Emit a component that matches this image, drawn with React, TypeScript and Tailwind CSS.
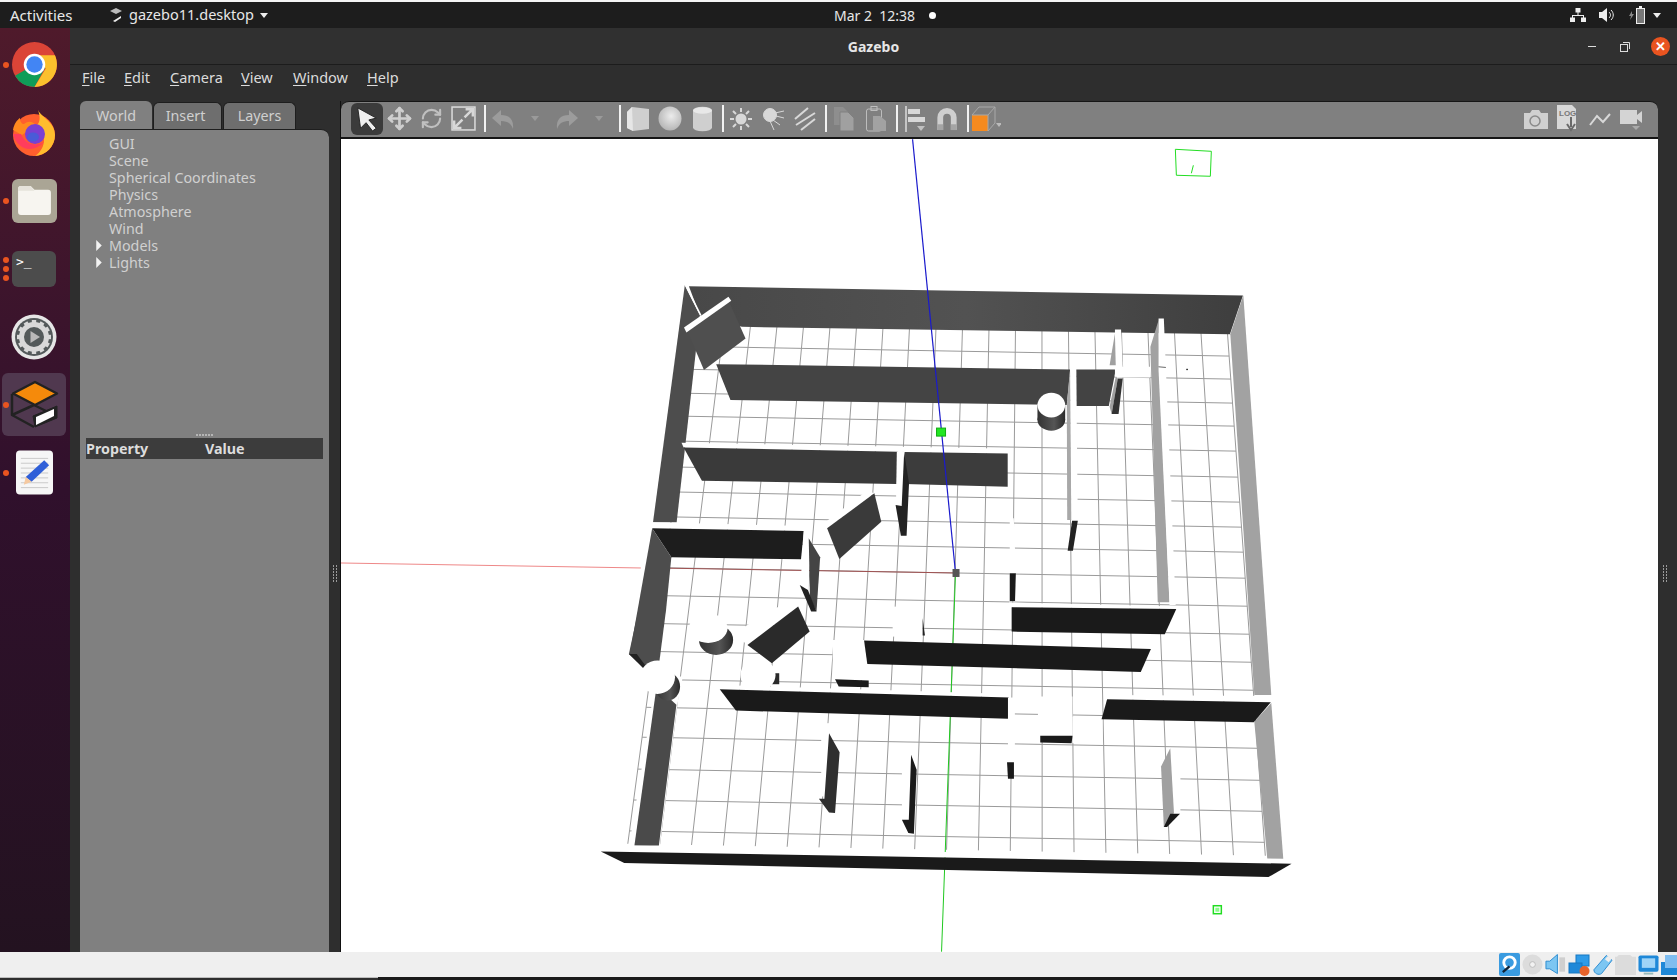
/* Gazebo 11 running inside an Ubuntu VM — window shell, panels and the maze scene. */
import { Move, RefreshCw } from 'lucide-react'
import type { ReactNode } from 'react'

const FONT = { fontFamily: '"Noto Sans", "Open Sans", sans-serif' }

const TREE = ['GUI', 'Scene', 'Spherical Coordinates', 'Physics', 'Atmosphere', 'Wind']
const MENU = [
    ['F', 'ile', 'w-[42px]'],
    ['E', 'dit', 'w-[46px]'],
    ['C', 'amera', 'w-[71px]'],
    ['V', 'iew', 'w-[52px]'],
    ['W', 'indow', 'w-[74px]'],
    ['H', 'elp', 'w-[40px]'],
]

function Poly({ p, f, s }: { p: string; f: string; s?: string }) {
    return <polygon points={p} fill={f} stroke={s} />
}

function Grid() {
    const rows = [328, 351, 374, 398, 421, 446, 472, 497, 522, 547, 573, 601, 629, 657, 685, 713, 743, 775, 806, 837]
    const t = (y: number) => (y - 327) / 523
    const cols = Array.from({ length: 21 }, (_, k) => k - 10)
    return (
        <g stroke="#9a9a9a" strokeWidth="1">
            {cols.map((i) => (
                <line key={i} x1={962 + 26.5 * i} y1={327 + i * 0.4} x2={946 + 31.9 * i} y2={850 + i * 0.6} />
            ))}
            {rows.map((y) => {
                const xl = 697 - 70 * t(y)
                const xr = 1227 + 38 * t(y)
                return <line key={y} x1={xl} y1={y + (xl - 955) * 0.018} x2={xr} y2={y + (xr - 955) * 0.018} />
            })}
        </g>
    )
}

function Scene() {
    return (
        <svg viewBox="340 139 1318 813" className="block h-full w-full bg-white">
            <defs>
                <linearGradient id="cyl" x1="0" x2="1" y1="0" y2="0">
                    <stop offset="0" stopColor="#333" />
                    <stop offset="0.6" stopColor="#555" />
                    <stop offset="1" stopColor="#2a2a2a" />
                </linearGradient>
                <linearGradient id="back" x1="0" x2="1" y1="0" y2="0">
                    <stop offset="0" stopColor="#484848" />
                    <stop offset="0.5" stopColor="#525252" />
                    <stop offset="1" stopColor="#3e3e3e" />
                </linearGradient>
            </defs>

            <Grid />

            {/* axes that sit under the walls */}
            <line x1="340" y1="563" x2="640" y2="568" stroke="#e88" strokeWidth="1" />
            <line x1="655" y1="568" x2="955" y2="573" stroke="#a05050" strokeWidth="1" />
            <line x1="955" y1="573" x2="941" y2="952" stroke="#1fc81f" strokeWidth="1" />

            {/* coordinates read off the upper half of the map */}
            <g transform="translate(640 270) scale(0.408 0.3333)">
                <Poly p="118,48 1477,76 1445,192 248,170 145,135" f="url(#back)" />
                <Poly p="108,45 145,135 88,757 30,757" f="#4d4d4d" />
                <line x1="110" y1="45" x2="147" y2="135" stroke="#fff" strokeWidth="4" />
                <Poly p="115,185 215,90 257,205 155,300" f="#4f4f4f" />
                <Poly p="106,172 215,80 222,92 112,187" f="#fff" />

                <Poly p="185,282 1053,298 1045,405 220,390" f="#444" />
                <Poly p="1068,298 1165,298 1148,408 1068,408" f="#434343" />
                <Poly p="1053,295 1068,295 1072,760 1056,750" f="#fff" />
                <Poly p="1045,405 1053,300 1056,750 1046,750" f="#a8a8a8" />
                <Poly p="1058,752 1072,752 1060,842 1047,842" f="#222" />

                <ellipse cx="1007" cy="450" rx="34" ry="32" fill="url(#cyl)" />
                <rect x="973" y="405" width="68" height="45" fill="url(#cyl)" />
                <ellipse cx="1007" cy="405" rx="34" ry="37" fill="#fff" />

                <Poly p="100,518 905,536 900,552 105,532" f="#fff" />
                <Poly p="105,532 630,545 628,642 150,632" f="#3a3a3a" />
                <Poly p="647,546 900,550 900,650 647,642" f="#3c3c3c" />
                <Poly p="628,545 646,545 642,710 626,705" f="#fff" />
                <Poly p="646,548 658,640 652,797 638,797 625,705 640,708" f="#222" />

                <Poly p="573,670 555,662 440,768 457,775" f="#fff" />
                <Poly p="573,670 590,755 487,867 457,775" f="#3a3a3a" />
                <Poly p="28,757 400,768 400,783 28,775" f="#fff" />
                <Poly p="28,775 400,783 393,868 75,862" f="#1d1d1d" />
                <Poly p="28,775 75,862 62,1020 44,1191 -27,1152" f="#4d4d4d" />
                <Poly p="400,775 414,790 412,985 392,945" f="#fff" />
                <Poly p="412,805 440,862 431,1025 415,985" f="#444" />
                <Poly p="390,945 410,960 431,1025 418,1025" f="#222" />

                <Poly p="1163,178 1178,178 1183,320 1163,320" f="#fff" />
                <Poly p="1168,290 1250,290 1250,322 1168,322" f="#fff" />
                <Poly p="1163,190 1150,285 1165,285" f="#a0a0a0" />
                <Poly p="1165,320 1150,410 1155,432 1170,325" f="#a0a0a0" />
                <Poly p="1170,325 1182,325 1172,432 1155,432" f="#333" />

                <Poly p="1270,150 1250,230 1268,997 1297,997 1272,300" f="#a2a2a2" />
                <Poly p="1270,145 1283,145 1312,1005 1297,1005 1270,300" f="#fff" />
                <Poly p="905,745 915,745 920,905 905,1000" f="#fff" />
                <Poly p="905,910 920,910 918,993 905,993" f="#1a1a1a" />
                <line x1="1270" y1="290" x2="1288" y2="292" stroke="#333" strokeWidth="2" />
                <rect x="1338" y="296" width="4" height="4" fill="#222" />
            </g>

            {/* right outer wall, broken by the white top of the lower wall */}
            <Poly p="1243,295 1230,334 1254,695 1271,695" f="#a2a2a2" />
            <Poly p="1271,703 1254,722 1267,859 1283,859" f="#a2a2a2" />

            {/* coordinates read off the lower half of the map */}
            <g transform="translate(587.5 590) scale(0.4615 0.3333)">
                <Poly p="88,772 134,380 145,260 205,260 193,345 155,767 102,780" f="#fff" />
                <Poly p="118,0 168,0 151,230 123,235 88,192" f="#4d4d4d" />
                <Poly p="88,192 105,192 131,240 123,240" f="#222" />
                <Poly p="148,290 191,345 153,767 100,767" f="#4a4a4a" />

                <Poly p="455,50 345,165 315,130 425,40" f="#fff" />
                <ellipse cx="277" cy="150" rx="37" ry="45" fill="url(#cyl)" />
                <ellipse cx="260" cy="115" rx="42" ry="44" fill="#fff" />
                <ellipse cx="172" cy="290" rx="27" ry="42" fill="url(#cyl)" />
                <ellipse cx="150" cy="262" rx="38" ry="50" fill="#fff" />
                <Poly p="455,50 480,125 398,220 345,165" f="#2a2a2a" />
                <rect x="392" y="250" width="22" height="33" fill="#2a2a2a" />
                <ellipse cx="368" cy="255" rx="38" ry="48" fill="#fff" />

                <Poly p="912,38 1275,50 1275,57 918,52" f="#fff" />
                <Poly p="918,52 1275,57 1250,133 918,125" f="#1a1a1a" />
                <Poly p="660,50 725,50 725,140 660,140" f="#fff" />
                <Poly p="725,85 730,137 725,137" f="#222" />
                <Poly p="530,150 605,150 605,270 530,270" f="#fff" />
                <Poly p="535,268 608,272 608,292 543,290" f="#1a1a1a" />
                <Poly p="598,152 1220,177 1198,246 605,222" f="#1a1a1a" />
                <Poly p="915,0 925,0 925,33 915,33" f="#1a1a1a" />

                <Poly p="285,285 912,312 912,323 285,298" f="#fff" />
                <Poly p="285,298 912,323 910,387 320,362" f="#1a1a1a" />
                <Poly p="910,323 925,323 925,520 910,520" f="#fff" />
                <Poly p="975,320 1050,320 1050,440 975,440" f="#fff" />
                <Poly p="1050,380 1115,380 1115,460 1050,460" f="#fff" />
                <Poly p="980,438 1050,438 1048,460 980,458" f="#1a1a1a" />
                <Poly p="908,517 923,517 923,567 910,567" f="#1a1a1a" />

                <Poly p="1125,315 1480,318 1480,337 1125,328" f="#fff" />
                <Poly p="1125,328 1480,337 1443,397 1113,388" f="#1a1a1a" />

                <Poly p="505,400 522,400 522,620 505,620" f="#fff" />
                <Poly p="522,430 545,487 535,670 522,668 500,627 512,627" f="#2f2f2f" />
                <Poly p="680,460 700,460 700,690 680,690" f="#fff" />
                <Poly p="700,495 712,540 706,732 694,730 680,690 695,690" f="#1a1a1a" />
                <Poly p="1262,475 1284,475 1284,670 1262,672" f="#fff" />
                <Poly p="1262,475 1242,530 1248,712 1270,670" f="#a0a0a0" />
                <Poly p="1262,672 1283,672 1255,712 1248,712" f="#1a1a1a" />

                <Poly p="80,767 1510,808 1525,822 27,785" f="#fff" />
                <Poly p="27,785 1525,822 1475,862 78,820" f="#1a1a1a" />
            </g>

            {/* markers drawn over everything */}
            <line x1="912" y1="139" x2="955" y2="573" stroke="#1a1acc" strokeWidth="1.2" />
            <rect x="936" y="428" width="9" height="8" fill="#22e622" stroke="#11aa11" />
            <rect x="952" y="569" width="7" height="8" fill="#555" />
            <polygon points="1175,149 1211,151 1210,176 1176,175" fill="none" stroke="#22dd22" strokeWidth="1" />
            <line x1="1193" y1="165" x2="1191" y2="173" stroke="#22dd22" />
            <rect x="1213" y="906" width="8" height="8" fill="none" stroke="#22dd22" strokeWidth="1.5" />
            <rect x="1215" y="908" width="4" height="4" fill="#8f8" />
        </svg>
    )
}

/* ---------- dock icons ---------- */

function Chrome() {
    return (
        <svg viewBox="0 0 44 44" className="h-[45px] w-[45px]">
            <circle cx="22" cy="22" r="22" fill="#db4437" />
            <path d="M22 22 L3 33 A22 22 0 0 0 22 44 L33 24 Z" fill="#0f9d58" />
            <path d="M22 13 H42 A22 22 0 0 1 22 44 L33 26 Z" fill="#fbc02d" />
            <circle cx="22" cy="22" r="10.5" fill="#fff" />
            <circle cx="22" cy="22" r="8" fill="#4285f4" />
        </svg>
    )
}

function Firefox() {
    return (
        <svg viewBox="0 0 46 46" className="h-[46px] w-[46px]">
            <circle cx="23" cy="25" r="21" fill="#ff5f2e" />
            <path d="M27 0 C30 7 44 12 44 25 A21 21 0 0 1 24 46 C36 38 36 22 25 16 C30 12 29 6 27 0 Z" fill="#ffbd2e" />
            <path d="M2 20 C3 14 6 10 9 8 C9 12 11 14 13 14 C18 10 22 12 25 15 L11 25 Z" fill="#ff8a1f" />
            <ellipse cx="24" cy="24" rx="10" ry="10" fill="#7b3fd1" />
            <ellipse cx="22" cy="27" rx="6" ry="4.5" fill="#4a5bd8" />
            <path d="M2 24 C6 40 22 44 33 32 C24 37 14 34 10 24 Z" fill="#ff3d5c" />
        </svg>
    )
}

function Files() {
    return (
        <div className="flex h-[44px] w-[45px] items-center justify-center rounded-md bg-[#aaa595]">
            <svg viewBox="0 0 34 30" className="h-[29px] w-[33px]">
                <path d="M3 0 H13 L17 4 H31 A3 3 0 0 1 34 7 V27 A3 3 0 0 1 31 30 H3 A3 3 0 0 1 0 27 V3 A3 3 0 0 1 3 0 Z" fill="#f7f5f0" />
                <path d="M0 5 H17 L13 0 H3 A3 3 0 0 0 0 3 Z" fill="#e6e3db" />
            </svg>
        </div>
    )
}

function Terminal() {
    return (
        <div className="h-[36px] w-[44px] rounded-md bg-[#4c4c4c] px-1 text-[13px] leading-[22px] text-white" style={{ fontFamily: '"DejaVu Sans Mono", monospace' }}>
            &gt;_
        </div>
    )
}

function Settings() {
    const teeth = Array.from({ length: 12 }, (_, k) => k * 30)
    return (
        <svg viewBox="0 0 46 46" className="h-[46px] w-[46px]">
            <circle cx="23" cy="23" r="22.5" fill="#e6e6e6" />
            <circle cx="23" cy="23" r="19" fill="#53595a" />
            <circle cx="23" cy="23" r="12.5" fill="none" stroke="#d8d8d8" strokeWidth="5" />
            {teeth.map((a) => (
                <rect key={a} x="20.8" y="6" width="4.4" height="5" fill="#d8d8d8" transform={`rotate(${a} 23 23)`} />
            ))}
            <path d="M19.5 17 L29 23 L19.5 29 Z" fill="#b9b9b9" />
        </svg>
    )
}

function GazeboLogo() {
    return (
        <svg viewBox="0 0 50 50" className="h-[50px] w-[50px]">
            <g fill="none" stroke="#222" strokeWidth="2.5" strokeLinejoin="round">
                <path d="M3 14 V35 L25 47" />
                <path d="M3 35 L25 25 L37 31" />
            </g>
            <polygon points="26,2 48,13.5 26,25 4,13.5" fill="#f58a0b" stroke="#222" strokeWidth="2.5" strokeLinejoin="round" />
            <polygon points="24,36 48,26 48,38 26,47" fill="#222" stroke="#222" strokeWidth="1" strokeLinejoin="round" />
            <polygon points="27,37 45,29 45,36 27,45" fill="#fff" />
        </svg>
    )
}

function Gedit() {
    return (
        <svg viewBox="0 0 38 46" className="h-[46px] w-[37px]">
            <rect width="38" height="45" rx="4" fill="#f6f6f6" />
            <g stroke="#c8c8c8" strokeWidth="1">
                {[8, 13, 18, 23, 28, 33, 38].map((y) => (
                    <line key={y} x1="5" y1={y} x2="33" y2={y} />
                ))}
            </g>
            <polygon points="29,10 34,15 16,32 10,27" fill="#2f5fd8" />
            <polygon points="10,27 16,32 8,35" fill="#f5c9a0" />
        </svg>
    )
}

function DockItem({ children, dots, active }: { children: ReactNode; dots?: number; active?: boolean }) {
    return (
        <div className={`relative flex h-[63px] w-[64px] items-center justify-center rounded-md ${active ? 'bg-[#50384f]' : ''}`}>
            {children}
            {dots ? (
                <div className="absolute left-[1px] top-1/2 flex -translate-y-1/2 flex-col gap-[3px]">
                    {Array.from({ length: dots }, (_, k) => (
                        <span key={k} className="h-[6px] w-[6px] rounded-full bg-[#e95420]" />
                    ))}
                </div>
            ) : null}
        </div>
    )
}

/* ---------- toolbar ---------- */

function Tool({ children, active }: { children: ReactNode; active?: boolean }) {
    return (
        <div className={`flex h-[32px] w-[32px] shrink-0 items-center justify-center ${active ? 'rounded-md bg-[#3b3b3b]' : ''}`}>
            {children}
        </div>
    )
}

function Sep() {
    return <div className="ml-[4px] mr-[1px] h-[27px] w-[2px] shrink-0 bg-[#f2f2f2]" />
}

function Caret({ c = '#9a9a9a' }: { c?: string }) {
    return <svg viewBox="0 0 8 5" className="h-[5px] w-[8px]"><path d="M0 0 H8 L4 5 Z" fill={c} /></svg>
}

function Toolbar() {
    return (
        <div className="flex h-[38px] shrink-0 items-center rounded-t-lg border-t border-b-2 border-[#161616] bg-[#808080] pb-[2px] pl-[10px] pr-[10px]">
            <div className="mr-[1px] flex items-center">
                <Tool active>
                    <svg viewBox="0 0 26 28" className="h-[26px] w-[24px]">
                        <path d="M3 2 L23 13 L15 15 L23 24 L19 27 L12 18 L6 24 Z" fill="#eee" stroke="#222" strokeWidth="1" />
                    </svg>
                </Tool>
                <Tool><Move size={25} strokeWidth={2.6} color="#cfcfcf" /></Tool>
                <Tool><RefreshCw size={23} strokeWidth={2.2} color="#c0c0c0" /></Tool>
                <Tool>
                    <svg viewBox="0 0 24 24" className="h-[25px] w-[25px]" fill="none" stroke="#d8d8d8">
                        <rect x="1" y="1" width="22" height="22" strokeWidth="1.5" />
                        <path d="M14 3 H21 V10 M21 3 L13 11 M3 14 V21 H10 M3 21 L11 13" strokeWidth="2.4" />
                    </svg>
                </Tool>
            </div>
            <Sep />
            <Tool>
                <svg viewBox="0 0 24 22" className="h-[22px] w-[24px]"><path d="M10 2 L1 10 L10 18 V13 C16 13 20 15 22 21 C23 11 18 7 10 7 Z" fill="#9c9c9c" /></svg>
            </Tool>
            <Tool><Caret /></Tool>
            <Tool>
                <svg viewBox="0 0 24 22" className="h-[22px] w-[24px]"><path d="M14 2 L23 10 L14 18 V13 C8 13 4 15 2 21 C1 11 6 7 14 7 Z" fill="#9c9c9c" /></svg>
            </Tool>
            <Tool><Caret /></Tool>
            <Sep />
            <Tool>
                <svg viewBox="0 0 24 26" className="h-[26px] w-[24px]">
                    <polygon points="1,6 6,1 23,3 23,23 7,25 1,22" fill="#cfcfcf" />
                    <polygon points="1,6 6,1 7,25 1,22" fill="#e6e6e6" />
                </svg>
            </Tool>
            <Tool>
                <svg viewBox="0 0 24 24" className="h-[25px] w-[24px]">
                    <defs>
                        <radialGradient id="ball" cx="0.55" cy="0.4" r="0.65">
                            <stop offset="0" stopColor="#ececec" />
                            <stop offset="1" stopColor="#b2b2b2" />
                        </radialGradient>
                    </defs>
                    <ellipse cx="12" cy="12" rx="11.5" ry="12" fill="url(#ball)" />
                </svg>
            </Tool>
            <Tool>
                <svg viewBox="0 0 20 26" className="h-[26px] w-[19px]">
                    <path d="M0 4 A10 4 0 0 1 20 4 V22 A10 4 0 0 1 0 22 Z" fill="#cfcfcf" />
                    <ellipse cx="10" cy="4" rx="10" ry="3.4" fill="#e8e8e8" />
                </svg>
            </Tool>
            <Sep />
            <Tool>
                <svg viewBox="0 0 24 24" className="h-[24px] w-[24px]" stroke="#d8d8d8" strokeWidth="2">
                    <circle cx="12" cy="12" r="5.5" fill="#d8d8d8" stroke="none" />
                    <path d="M12 1 V5 M12 19 V23 M1 12 H5 M19 12 H23 M4 4 L7 7 M17 17 L20 20 M4 20 L7 17 M17 7 L20 4" />
                </svg>
            </Tool>
            <Tool>
                <svg viewBox="0 0 24 24" className="h-[24px] w-[24px]" stroke="#d8d8d8" strokeWidth="1">
                    <circle cx="9" cy="8" r="6.5" fill="#d8d8d8" />
                    <path d="M14 6 L23 4 M15 9 L23 11 M12 13 L19 18 M9 14 L13 23" />
                </svg>
            </Tool>
            <Tool>
                <svg viewBox="0 0 24 24" className="h-[24px] w-[24px]" stroke="#d8d8d8" strokeWidth="2">
                    <path d="M2 12 L15 1 M3 18 L22 6 M8 23 L22 12" />
                </svg>
            </Tool>
            <Sep />
            <Tool>
                <svg viewBox="0 0 20 24" className="h-[24px] w-[20px]">
                    <path d="M0 0 H9 L14 5 V18 H0 Z" fill="#8e8e8e" />
                    <path d="M6 5 H14 L20 11 V24 H6 Z" fill="#a0a0a0" stroke="#808080" />
                </svg>
            </Tool>
            <Tool>
                <svg viewBox="0 0 20 26" className="h-[26px] w-[20px]">
                    <rect x="0.5" y="3" width="15" height="22" rx="2" fill="none" stroke="#bdbdbd" />
                    <rect x="5" y="0.5" width="6" height="4" fill="none" stroke="#bdbdbd" />
                    <path d="M7 10 H14 L20 15 V25 H7 Z" fill="#a2a2a2" />
                </svg>
            </Tool>
            <Sep />
            <Tool>
                <svg viewBox="0 0 20 26" className="h-[26px] w-[20px]">
                    <path d="M1 0 V26" stroke="#ddd" strokeWidth="1.5" />
                    <rect x="3" y="3" width="12" height="5" fill="#d8d8d8" />
                    <rect x="3" y="11" width="17" height="5" fill="#d8d8d8" />
                    <path d="M12 20 H20 L16 25 Z" fill="#c0c0c0" />
                </svg>
            </Tool>
            <Tool>
                <svg viewBox="0 0 24 26" className="h-[25px] w-[24px]">
                    <path d="M2 25 V12 A10 10 0 0 1 22 12 V25 H16 V12 A4 4 0 0 0 8 12 V25 Z" fill="#cfcfcf" />
                    <rect x="2" y="19" width="6" height="6" fill="#a5a5a5" />
                    <rect x="16" y="19" width="6" height="6" fill="#a5a5a5" />
                </svg>
            </Tool>
            <Sep />
            <Tool>
                <svg viewBox="0 0 30 26" className="h-[26px] w-[30px]">
                    <rect x="1" y="9" width="16" height="16" fill="#f58a1f" />
                    <path d="M1 9 L8 1 H24 V17 L17 25 M17 9 L24 1 M1 9 H17 V25" fill="none" stroke="#a8a8a8" />
                    <path d="M25 17 H31 L28 21 Z" fill="#bbb" />
                </svg>
            </Tool>
            <div className="ml-auto flex items-center">
                <Tool>
                    <svg viewBox="0 0 24 20" className="h-[20px] w-[24px]">
                        <path d="M0 4 H6 L8 1 H15 L17 4 H24 V20 H0 Z" fill="#d0d0d0" />
                        <circle cx="11" cy="12" r="5" fill="none" stroke="#8a8a8a" strokeWidth="1.5" />
                    </svg>
                </Tool>
                <Tool>
                    <svg viewBox="0 0 22 28" className="h-[28px] w-[22px]">
                        <path d="M0 0 H15 L19 4 V24 H0 Z" fill="#d8d8d8" />
                        <text x="2" y="11" fontSize="8" fontWeight="700" fill="#777" fontFamily="Liberation Sans">LOG</text>
                        <path d="M14 12 V22 M10 19 L14 25 L18 19" stroke="#6a6a6a" strokeWidth="2" fill="none" />
                    </svg>
                </Tool>
                <Tool>
                    <svg viewBox="0 0 24 16" className="h-[16px] w-[24px]" fill="none" stroke="#d8d8d8" strokeWidth="2">
                        <path d="M2 14 L9 5 L15 11 L22 3" />
                    </svg>
                </Tool>
                <Tool>
                    <svg viewBox="0 0 24 22" className="h-[22px] w-[24px]">
                        <rect y="2" width="17" height="14" fill="#d4d4d4" />
                        <path d="M17 7 L22 3 V15 L17 11 Z" fill="#d4d4d4" />
                        <path d="M12 18 H20 L16 22 Z" fill="#aaa" />
                    </svg>
                </Tool>
            </div>
        </div>
    )
}

/* ---------- left panel ---------- */

function Triangle() {
    return <svg viewBox="0 0 6 12" className="absolute left-[-13px] top-[3px] h-[11px] w-[6px]"><path d="M0 0 L6 6 L0 12 Z" fill="#f2f2f2" /></svg>
}

function SidePanel() {
    return (
        <div className="flex w-[249px] shrink-0 flex-col text-[14.3px] text-[#d0d0d0]">
            <div className="flex h-[28px] items-end gap-[1px]">
                <div className="flex h-[28px] w-[72px] items-center justify-center rounded-t-md bg-[#808080] pt-[2px]">World</div>
                <div className="flex h-[27px] w-[69px] items-center justify-center rounded-t-md border border-b-0 border-[#1e1e1e] bg-[#6e6e6e] pr-[4px]">Insert</div>
                <div className="flex h-[27px] w-[73px] items-center justify-center rounded-t-md border border-b-0 border-[#1e1e1e] bg-[#6e6e6e]">Layers</div>
            </div>
            <div className="flex flex-1 flex-col rounded-tr-lg border-t border-[#1e1e1e] bg-[#808080]">
                <div className="flex h-[303px] flex-col pl-[29px] pt-[5px] leading-[17px]">
                    {TREE.map((t) => (
                        <div key={t}>{t}</div>
                    ))}
                    <div className="relative">
                        <Triangle />
                        Models
                    </div>
                    <div className="relative">
                        <Triangle />
                        Lights
                    </div>
                </div>
                <div className="flex h-[5px] justify-center gap-[1px] pt-[1px]">
                    {Array.from({ length: 6 }, (_, k) => (
                        <span key={k} className="h-[2px] w-[2px] bg-[#b5b5b5]" />
                    ))}
                </div>
                <div className="mx-[6px] flex h-[21px] items-center bg-[#3c3c3c] font-bold text-[#dcdcdc]">
                    <div className="w-[119px]">Property</div>
                    <div>Value</div>
                </div>
            </div>
        </div>
    )
}

function Grip() {
    return (
        <div className="flex flex-col gap-[1px] pt-[94px]">
            {[0, 1, 2, 3, 4, 5].map((k) => (
                <span key={k} className="h-[2px] w-[4px] border-x border-[#9a9a9a]" />
            ))}
        </div>
    )
}

/* ---------- shell ---------- */

export default function App() {
    return (
        <div className="flex h-[980px] w-[1677px] flex-col overflow-hidden bg-[#2e2e2e]" style={FONT}>
            <div className="h-[2px] shrink-0 bg-[#f4f4f4]" />

            {/* GNOME top bar */}
            <div className="relative flex h-[26px] shrink-0 items-center bg-[#1d1d1d] text-[14.5px] text-[#e8e8e8]">
                <div className="ml-[10px] w-[99px] text-[15px]">Activities</div>
                <svg viewBox="0 0 14 14" className="mr-[6px] h-[14px] w-[14px]">
                    <path d="M7 0 L13 3 L7 6 L1 3 Z" fill="#bbb" />
                    <path d="M4 13 L12 8 L12 10 L6 14 Z" fill="#eee" />
                </svg>
                <div className="mr-[6px]">gazebo11.desktop</div>
                <Caret c="#eee" />
                <div className="absolute left-[834px] flex items-center text-[14px]">
                    <span>Mar 2&nbsp;&nbsp;12:38</span>
                    <span className="ml-[14px] h-[7px] w-[7px] rounded-full bg-white" />
                </div>
                <div className="ml-auto mr-[16px] flex items-center">
                    <svg viewBox="0 0 16 14" className="mr-[13px] h-[14px] w-[16px]" fill="#eee">
                        <rect x="5.5" y="0" width="5" height="4.5" />
                        <rect x="0" y="9.5" width="5" height="4.5" />
                        <rect x="11" y="9.5" width="5" height="4.5" />
                        <path d="M7.5 4 H8.5 V7 H14 V10 H13 V8 H3 V10 H2 V7 H7.5 Z" />
                    </svg>
                    <svg viewBox="0 0 16 14" className="mr-[14px] h-[14px] w-[16px]" fill="#eee">
                        <path d="M0 4 H3 L8 0 V14 L3 10 H0 Z" />
                        <path d="M10 4 C12 6 12 8 10 10 M12 2 C15 5 15 9 12 12" stroke="#eee" fill="none" />
                    </svg>
                    <svg viewBox="0 0 16 18" className="mr-[8px] h-[18px] w-[16px]">
                        <path d="M3 5 L0 10 H2 L1 14 L5 8 H3 Z" fill="#888" />
                        <rect x="7.5" y="2.5" width="8" height="15" fill="#777" stroke="#eee" />
                        <rect x="10" y="0" width="3" height="2" fill="#eee" />
                    </svg>
                    <Caret c="#eee" />
                </div>
            </div>

            <div className="flex h-[924px] shrink-0">
                {/* dock */}
                <div className="flex w-[70px] shrink-0 flex-col items-center gap-[5px] bg-gradient-to-b from-[#4f1a2b] via-[#30102c] to-[#231220] pr-[2px] pt-[5px]">
                    <DockItem dots={1}><Chrome /></DockItem>
                    <DockItem><Firefox /></DockItem>
                    <DockItem dots={1}><Files /></DockItem>
                    <DockItem dots={3}><Terminal /></DockItem>
                    <DockItem><Settings /></DockItem>
                    <DockItem dots={1} active><GazeboLogo /></DockItem>
                    <DockItem dots={1}><Gedit /></DockItem>
                </div>

                {/* Gazebo window */}
                <div className="flex min-w-0 flex-1 flex-col">
                    <div className="relative flex h-[37px] shrink-0 items-center justify-center border-b border-[#1c1c1c] bg-[#303030] text-[14px] font-bold text-[#e6e6e6]">
                        <span>Gazebo</span>
                        <div className="absolute right-[7px] top-[9px] flex items-center">
                            <span className="mr-[24px] h-[1px] w-[8px] bg-[#ddd]" />
                            <svg viewBox="0 0 10 10" className="mr-[21px] h-[10px] w-[10px]" fill="none" stroke="#ddd">
                                <rect x="0.5" y="2.5" width="7" height="7" />
                                <path d="M3 0.5 H9.5 V7" />
                            </svg>
                            <span className="flex h-[19px] w-[19px] items-center justify-center rounded-full bg-[#e95420] text-[13px] leading-none text-white">✕</span>
                        </div>
                    </div>

                    <div className="flex h-[36px] shrink-0 items-center pb-[10px] pl-[12px] text-[14.5px] text-[#dcdcdc]">
                        {MENU.map(([u, rest, w]) => (
                            <div key={u} className={w}>
                                <span className="underline underline-offset-2">{u}</span>
                                {rest}
                            </div>
                        ))}
                    </div>

                    <div className="flex min-h-0 flex-1 pl-[10px]">
                        <SidePanel />
                        <div className="flex w-[11px] shrink-0 items-center justify-center"><Grip /></div>
                        <div className="flex w-[1318px] shrink-0 flex-col border-l border-[#111]">
                            <Toolbar />
                            <div className="min-h-0 flex-1"><Scene /></div>
                        </div>
                        <div className="flex w-[19px] shrink-0 items-center justify-center pr-[5px]"><Grip /></div>
                    </div>
                </div>
            </div>

            {/* VirtualBox status bar */}
            <div className="flex h-[25px] shrink-0 items-center justify-end gap-[2px] bg-[#efefef]">
                <svg viewBox="0 0 22 24" className="h-[23px] w-[21px]">
                    <rect width="22" height="24" rx="2" fill="#3a9be0" />
                    <circle cx="11" cy="10" r="6" fill="none" stroke="#fff" strokeWidth="3" />
                    <path d="M11 14 L4 20" stroke="#123" strokeWidth="2.5" />
                </svg>
                <svg viewBox="0 0 22 22" className="h-[21px] w-[21px]">
                    <circle cx="11" cy="11" r="10.5" fill="#dcdcdc" />
                    <circle cx="11" cy="11" r="3" fill="#f2f2f2" stroke="#bbb" />
                </svg>
                <svg viewBox="0 0 22 22" className="h-[22px] w-[21px]">
                    <path d="M1 7 H5 L13 0 V20 L5 15 H1 Z" fill="#7cc6f2" stroke="#2a8ad0" />
                    <rect x="15" y="3" width="6" height="15" fill="#cfcfcf" />
                </svg>
                <svg viewBox="0 0 22 22" className="h-[22px] w-[22px]">
                    <rect x="8" y="1" width="13" height="11" fill="#2f9be8" stroke="#1678c2" />
                    <rect x="1" y="9" width="13" height="10" fill="#1e88d8" stroke="#1678c2" />
                    <circle cx="16.5" cy="17" r="5" fill="#e8632a" />
                </svg>
                <svg viewBox="0 0 22 22" className="h-[22px] w-[21px]">
                    <path d="M15 1 L21 6 L10 20 C7 22 2 20 2 16 Z" fill="#7cc6f2" stroke="#2a8ad0" />
                    <rect x="15" y="2" width="5" height="5" fill="#eee" transform="rotate(40 17 4)" />
                </svg>
                <svg viewBox="0 0 22 22" className="h-[21px] w-[21px]">
                    <path d="M0 3 H2 L4 1 H16 L18 3 H22 V22 H0 Z" fill="#dcdcdc" />
                </svg>
                <svg viewBox="0 0 22 22" className="h-[22px] w-[21px]">
                    <rect x="0.5" y="1" width="21" height="17" rx="2" fill="#1e88d8" />
                    <rect x="4" y="4" width="14" height="10" fill="#9fd4f7" />
                    <rect x="6" y="19" width="10" height="2" fill="#9bb" />
                </svg>
                <svg viewBox="0 0 16 22" className="h-[22px] w-[16px]">
                    <rect x="0" y="8" width="16" height="13" fill="#1e88d8" />
                    <rect x="4" y="1" width="12" height="13" fill="#7fbdf0" />
                </svg>
            </div>
            <div className="flex h-[3px] shrink-0">
                <div className="h-[1px] w-[378px] bg-[#bdbdbd]" />
                <div className="flex-1 bg-[#1a1a1a]" />
            </div>
        </div>
    )
}
